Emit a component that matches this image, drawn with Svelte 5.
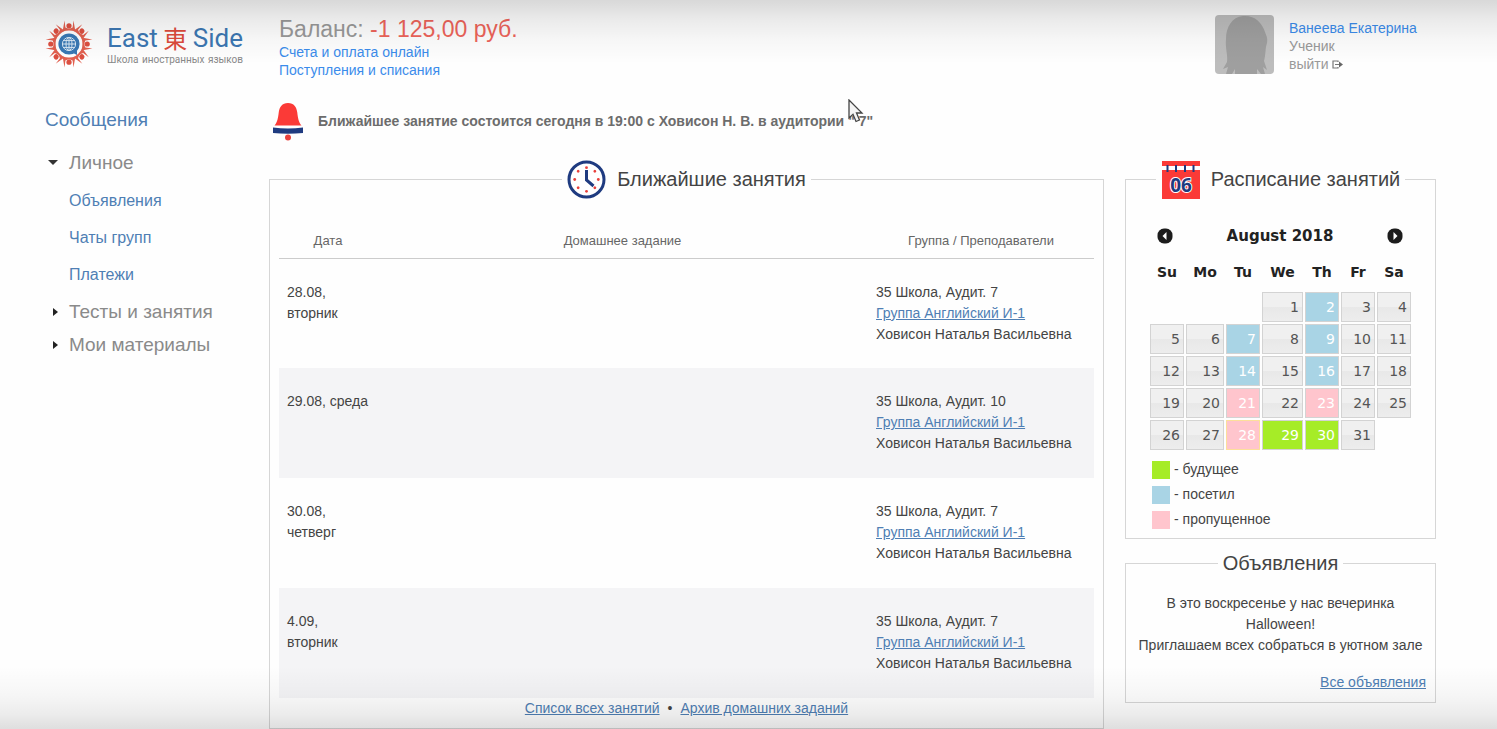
<script>
  let personalOpen = $state(true);

  const personalLinks = ["Объявления", "Чаты групп", "Платежи"];

  const lessons = [
    { date: "28.08,", day: "вторник", room: "35 Школа, Аудит. 7" },
    { date: "29.08,", day: "среда", room: "35 Школа, Аудит. 10" },
    { date: "30.08,", day: "четверг", room: "35 Школа, Аудит. 7" },
    { date: "4.09,", day: "вторник", room: "35 Школа, Аудит. 7" },
  ];

  const weekdays = ["Su", "Mo", "Tu", "We", "Th", "Fr", "Sa"];
  const dayState = {
    2: "visited",
    7: "visited",
    9: "visited",
    14: "visited",
    16: "visited",
    21: "missed",
    23: "missed",
    28: "missed today",
    29: "future",
    30: "future",
  };

  // August 2018 starts on Wednesday
  const weeks = Array.from({ length: 5 }, (_, w) =>
    Array.from({ length: 7 }, (_, d) => {
      const n = w * 7 + d - 2;
      return n > 0 && n <= 31 ? n : null;
    })
  );

  const legendItems = [
    { type: "future", text: "будущее" },
    { type: "visited", text: "посетил" },
    { type: "missed", text: "пропущенное" },
  ];

  const eighths = [0, 45, 90, 135, 180, 225, 270, 315];
</script>

<div class="page">
  <header>
    <a class="logo" href="#home">
      <svg width="48" height="48" viewBox="-24 -24 48 48" aria-hidden="true">
        {#each eighths as a}
          <g transform="rotate({a})">
            <circle cx="0" cy="-18.2" r="2.6" fill="#dd4f40" />
            <path
              d="M-4.5 -23.4 L-3.6 -16.4 Q0 -14.4 3.6 -16.4 L4.5 -23.4 L6.4 -12.4 Q3 -13.4 0 -13.4 Q-3 -13.4 -6.4 -12.4Z"
              fill="#e2604f"
            />
          </g>
        {/each}
        <circle r="12.6" fill="#fff" />
        <circle r="10.6" fill="#3878b4" />
        <path d="M4 9 L8 11 L8 6Z" fill="#3878b4" />
        <g fill="none" stroke="#dbe9f5" stroke-width="1">
          <circle r="6.6" />
          <ellipse rx="3" ry="6.6" />
          <path d="M0 -6.6V6.6M-6.6 0H6.6M-5.6 -3.4H5.6M-5.6 3.4H5.6" />
        </g>
      </svg>
      <span class="brand">
        <span class="name">
          <span>East</span><span class="kanji">東</span><span>Side</span>
        </span>
        <span class="slogan">
          <span>Школа</span> <span>иностранных</span> <span>языков</span>
        </span>
      </span>
    </a>

    <div class="balance">
      <div class="sum">Баланс: <span>-1 125,00 руб.</span></div>
      <a href="#bills">Счета и оплата онлайн</a>
      <a href="#payments">Поступления и списания</a>
    </div>

    <div class="user">
      <svg class="avatar" width="59" height="59" viewBox="0 0 59 59" role="img" aria-label="Фото">
        <rect width="59" height="59" fill="#bdbdbd" />
        <path
          d="M28 1C17 2 11 12 11 24C10 33 13 40 12 47L8 54L13 52L11 59H17L20 54V59H42V54L46 59H50L48 52L52 55L49 46C51 39 50 34 52 28C53 23 51 20 50 17C47 7 39 0 28 1Z"
          fill="#9f9f9f"
        />
      </svg>
      <div class="who">
        <a href="#profile">Ванеева Екатерина</a>
        <span>Ученик</span>
        <a class="exit" href="#logout">
          выйти
          <svg width="11" height="9" viewBox="0 0 11 9" aria-hidden="true">
            <path d="M6 2V1H1V8H6V7M3 4.5H8" fill="none" stroke="#777" stroke-width="1.2" />
            <path d="M7 1.6L11 4.5L7 7.4Z" fill="#666" />
          </svg>
        </a>
      </div>
    </div>
  </header>

  <div class="body">
    <nav>
      <a class="top" href="#messages">Сообщения</a>
      <button
        class:open={personalOpen}
        aria-expanded={personalOpen}
        onclick={() => (personalOpen = !personalOpen)}
      >
        <i></i>Личное
      </button>
      {#if personalOpen}
        <ul>
          {#each personalLinks as l}
            <li><a href="#personal">{l}</a></li>
          {/each}
        </ul>
      {/if}
      <button><i></i>Тесты и занятия</button>
      <button><i></i>Мои материалы</button>
    </nav>

    <main>
      <div class="notice">
        <svg width="32" height="38" viewBox="0 0 32 38" aria-hidden="true">
          <path
            d="M16 0C10 0 7.500 4 6.800 9C6 15 5.500 19 2.500 22.500H29.500C26.500 19 26 15 25.200 9C24.500 4 22 0 16 0Z"
            fill="#fb3a37"
          />
          <path d="M1 24.500Q16 26.500 31 24.500V30Q16 31.500 1 30Z" fill="#1f3b80" />
          <circle cx="16" cy="34.500" r="3" fill="#e8403c" />
        </svg>
        <strong>
          Ближайшее занятие состоится сегодня в 19:00 с Ховисон Н. В. в аудитории
          <span class="room">
            " 7"
            <svg class="cursor" width="16" height="24" viewBox="0 0 16 24" aria-hidden="true">
              <path
                d="M1 1V19L5 15.300L8 22.500L11.500 21L8.500 14H14Z"
                fill="#f4f4f4"
                stroke="#444"
                stroke-width="1.300"
              />
            </svg>
          </span>
        </strong>
      </div>

      <div class="columns">
        <fieldset class="lessons">
          <legend>
            <svg width="39" height="39" viewBox="0 0 39 39" aria-hidden="true">
              <circle cx="19.500" cy="19.500" r="17.500" fill="#fff" stroke="#1f3b80" stroke-width="3" />
              {#each eighths as a}
                <circle
                  cx="19.5"
                  cy="7.7"
                  r="1.4"
                  fill="#e8403c"
                  transform="rotate({a} 19.5 19.5)"
                />
              {/each}
              <path d="M19.500 10V20L26.500 26" fill="none" stroke="#1f3b80" stroke-width="3" />
            </svg>
            Ближайшие занятия
          </legend>

          <table class="list">
            <thead>
              <tr>
                <th>Дата</th>
                <th>Домашнее задание</th>
                <th>Группа / Преподаватели</th>
              </tr>
            </thead>
            <tbody>
              {#each lessons as l}
                <tr>
                  <td>{l.date} {l.day}</td>
                  <td></td>
                  <td>
                    {l.room}<br />
                    <a href="#group">Группа Английский И-1</a><br />
                    Ховисон Наталья Васильевна
                  </td>
                </tr>
              {/each}
            </tbody>
          </table>
          <div class="more">
            <a href="#all">Список всех занятий</a>
            <span>•</span>
            <a href="#archive">Архив домашних заданий</a>
          </div>
        </fieldset>

        <div class="side">
          <fieldset class="schedule">
            <legend>
              <svg width="39" height="39" viewBox="0 0 39 39" aria-hidden="true">
                <rect x="1" y="1" width="38" height="38" fill="#fb3a37" />
                <rect x="1" y="6" width="38" height="4" fill="#fff" />
                <path
                  d="M6.500 5V12M15 5V12M24 5V12M32.500 5V12"
                  stroke="#1f3b80"
                  stroke-width="2"
                />
                <text x="20" y="32" text-anchor="middle">06</text>
              </svg>
              Расписание занятий
            </legend>

            <div class="month">
              <button aria-label="Prev">
                <svg width="16" height="16" viewBox="0 0 16 16" aria-hidden="true">
                  <rect x="0.500" y="0.500" width="15" height="15" rx="6.500" fill="#1c1c1c" />
                  <path d="M9.500 4V12L5.500 8Z" fill="#fff" />
                </svg>
              </button>
              <b>August 2018</b>
              <button aria-label="Next">
                <svg width="16" height="16" viewBox="0 0 16 16" aria-hidden="true">
                  <rect x="0.500" y="0.500" width="15" height="15" rx="6.500" fill="#1c1c1c" />
                  <path d="M6.500 4V12L10.500 8Z" fill="#fff" />
                </svg>
              </button>
            </div>

            <table class="calendar">
              <thead>
                <tr>
                  {#each weekdays as w}
                    <th>{w}</th>
                  {/each}
                </tr>
              </thead>
              <tbody>
                {#each weeks as week}
                  <tr>
                    {#each week as n}
                      <td>
                        {#if n}
                          <a href="#day" class={dayState[n]}>{n}</a>
                        {/if}
                      </td>
                    {/each}
                  </tr>
                {/each}
              </tbody>
            </table>

            <ul class="keys">
              {#each legendItems as k}
                <li><i class={k.type}></i>- {k.text}</li>
              {/each}
            </ul>
          </fieldset>

          <fieldset class="news">
            <legend>Объявления</legend>
            <p>
              В это воскресенье у нас вечеринка Halloween!<br />
              Приглашаем всех собраться в уютном зале
            </p>
            <a href="#news">Все объявления</a>
          </fieldset>
        </div>
      </div>
    </main>
  </div>
</div>

<style>
  :global(body) {
    margin: 0;
    background: #fefefe;
  }

  .page {
    position: relative;
    padding: 0 61px 1px 45px;
    font-family: "Liberation Sans", Arial, sans-serif;
    font-size: 14px;
    line-height: 21px;
    color: #444;
  }

  /* grey shading along the top and bottom edges */
  .page::before,
  .page::after {
    content: "";
    position: absolute;
    left: 0;
    right: 0;
    height: 64px;
    pointer-events: none;
  }
  .page::before {
    top: 0;
    background: linear-gradient(
      rgba(0, 0, 0, 0.15),
      rgba(0, 0, 0, 0.08) 30%,
      rgba(0, 0, 0, 0.03) 62%,
      rgba(0, 0, 0, 0)
    );
  }
  .page::after {
    bottom: 0;
    background: linear-gradient(
      rgba(0, 0, 0, 0),
      rgba(0, 0, 0, 0.03) 45%,
      rgba(0, 0, 0, 0.07) 75%,
      rgba(0, 0, 0, 0.13)
    );
  }

  a {
    color: #4f7fb4;
  }

  header {
    display: flex;
    align-items: flex-start;
    height: 84px;
    padding-top: 15px;
    box-sizing: border-box;
  }
  header a {
    color: #3b8ceb;
    text-decoration: none;
  }

  .logo {
    display: flex;
    gap: 14px;
    width: 234px;
    padding-top: 5px;
  }
  .brand {
    width: 136px;
    font-family: Roboto, sans-serif;
  }
  .name {
    display: flex;
    justify-content: space-between;
    align-items: center;
    font-size: 26px;
    line-height: 36px;
    color: #3c77b2;
  }
  .kanji {
    font-family: "Noto Sans CJK JP", sans-serif;
    font-size: 24px;
    color: #dd4b3c;
  }
  .slogan {
    display: flex;
    justify-content: space-between;
    font-size: 10px;
    line-height: 8px;
    color: #888;
  }

  .balance {
    display: flex;
    flex-direction: column;
    line-height: 18px;
  }
  .sum {
    font-size: 23px;
    line-height: 28px;
    color: #999;
  }
  .sum span {
    color: #ee645a;
  }

  .user {
    display: flex;
    gap: 15px;
    width: 221px;
    margin-left: auto;
  }
  .avatar {
    border-radius: 4px;
  }
  .who {
    display: flex;
    flex-direction: column;
    padding-top: 4px;
    line-height: 18px;
    color: #999;
  }
  .who .exit {
    color: #999;
  }

  .body {
    display: flex;
  }

  nav {
    width: 224px;
    flex: none;
    padding-top: 20px;
  }
  nav .top {
    display: block;
    margin-bottom: 10px;
    font-size: 19px;
    line-height: 32px;
    text-decoration: none;
  }
  nav button {
    display: flex;
    align-items: center;
    padding: 0;
    border: 0;
    background: none;
    font: inherit;
    font-size: 19px;
    line-height: 33px;
    color: #8a8a8a;
    cursor: pointer;
  }
  nav button i {
    width: 0;
    margin: 0 11px 0 8px;
    border: 4px solid transparent;
    border-left: 5px solid #222;
    border-right: 0;
  }
  nav button.open i {
    margin: 0 11px 0 3px;
    border: 5px solid transparent;
    border-top: 5px solid #333;
    border-bottom: 0;
  }
  nav ul {
    margin: 0 0 2px;
    padding: 3px 0 0 24px;
    list-style: none;
  }
  nav li {
    font-size: 16px;
    line-height: 37px;
  }
  nav li a {
    text-decoration: none;
  }

  main {
    flex: 1;
    min-width: 0;
  }

  .notice {
    display: flex;
    align-items: center;
    gap: 14px;
    height: 75px;
    padding-left: 3px;
    box-sizing: border-box;
    color: #6c6c6c;
  }
  .room {
    position: relative;
    white-space: nowrap;
  }
  .cursor {
    position: absolute;
    left: 0;
    bottom: 6px;
  }

  .columns {
    display: flex;
    align-items: flex-start;
    gap: 21px;
  }

  fieldset {
    min-width: 0;
    margin: 0;
    padding: 0 9px;
    border: 1px solid #d6d6d6;
  }
  legend {
    display: flex;
    align-items: center;
    gap: 11px;
    height: 40px;
    margin: 0 auto;
    padding: 0 5px;
    font-size: 20px;
  }

  .lessons {
    flex: 1;
  }
  .list {
    width: 100%;
    table-layout: fixed;
    border-collapse: collapse;
  }
  .list th {
    height: 59px;
    padding: 24px 0 0;
    box-sizing: border-box;
    border-bottom: 1px solid #ccc;
    font-size: 13px;
    font-weight: normal;
    color: #666;
  }
  .list th:first-child {
    width: 98px;
  }
  .list th:last-child {
    width: 226px;
  }
  .list td {
    height: 110px;
    padding: 23px 8px 0;
    box-sizing: border-box;
    vertical-align: top;
  }
  .list tr:nth-child(even) td {
    background: #f4f4f6;
  }
  .more {
    display: flex;
    justify-content: center;
    gap: 8px;
    padding-bottom: 9px;
  }

  .side {
    width: 311px;
    flex: none;
  }
  .schedule text {
    font: bold 19px "Noto Sans", sans-serif;
    fill: #1f3b80;
    stroke: #fff;
    stroke-width: 2;
    paint-order: stroke;
  }
  .month {
    display: flex;
    justify-content: space-between;
    align-items: center;
    height: 34px;
    margin: 20px 23px 0 22px;
    font-family: "DejaVu Sans", Verdana, sans-serif;
    font-size: 15px;
    color: #222;
  }
  .month button {
    display: flex;
    padding: 0;
    border: 0;
    background: none;
    cursor: pointer;
  }
  .calendar {
    width: 263px;
    margin: 0 auto 6px 14px;
    table-layout: fixed;
    border-collapse: collapse;
    font-family: "DejaVu Sans", Verdana, sans-serif;
  }
  .calendar th {
    width: 36px;
    height: 38px;
    padding: 0;
    font-size: 14px;
    color: #222;
  }
  .calendar th:nth-child(2) {
    width: 40px;
  }
  .calendar th:nth-child(4) {
    width: 43px;
  }
  .calendar td {
    height: 32px;
    padding: 1px;
    box-sizing: border-box;
  }
  .calendar a {
    display: block;
    padding-right: 3px;
    border: 1px solid #d3d3d3;
    background: linear-gradient(#f0f0f0 50%, #e8e8e8 50%, #ededed);
    line-height: 28px;
    text-align: right;
    text-decoration: none;
    color: #555;
  }
  .calendar .visited,
  .calendar .missed,
  .calendar .future {
    color: #fff;
  }
  .calendar .today {
    border-color: #fcdf9a;
  }
  .visited,
  .calendar .visited {
    background: #a9d4e5;
  }
  .missed,
  .calendar .missed {
    background: #ffc5cd;
  }
  .future,
  .calendar .future {
    background: #a6ec27;
  }

  .keys {
    margin: 0;
    padding: 0 0 6px 17px;
    list-style: none;
  }
  .keys li {
    display: flex;
    align-items: center;
    gap: 4px;
    line-height: 25px;
  }
  .keys i {
    width: 18px;
    height: 18px;
  }

  .news {
    margin-top: 12px;
    padding-bottom: 9px;
    text-align: right;
  }
  .news legend {
    height: 24px;
  }
  .news p {
    margin: 18px 0 16px;
    text-align: center;
  }
</style>
